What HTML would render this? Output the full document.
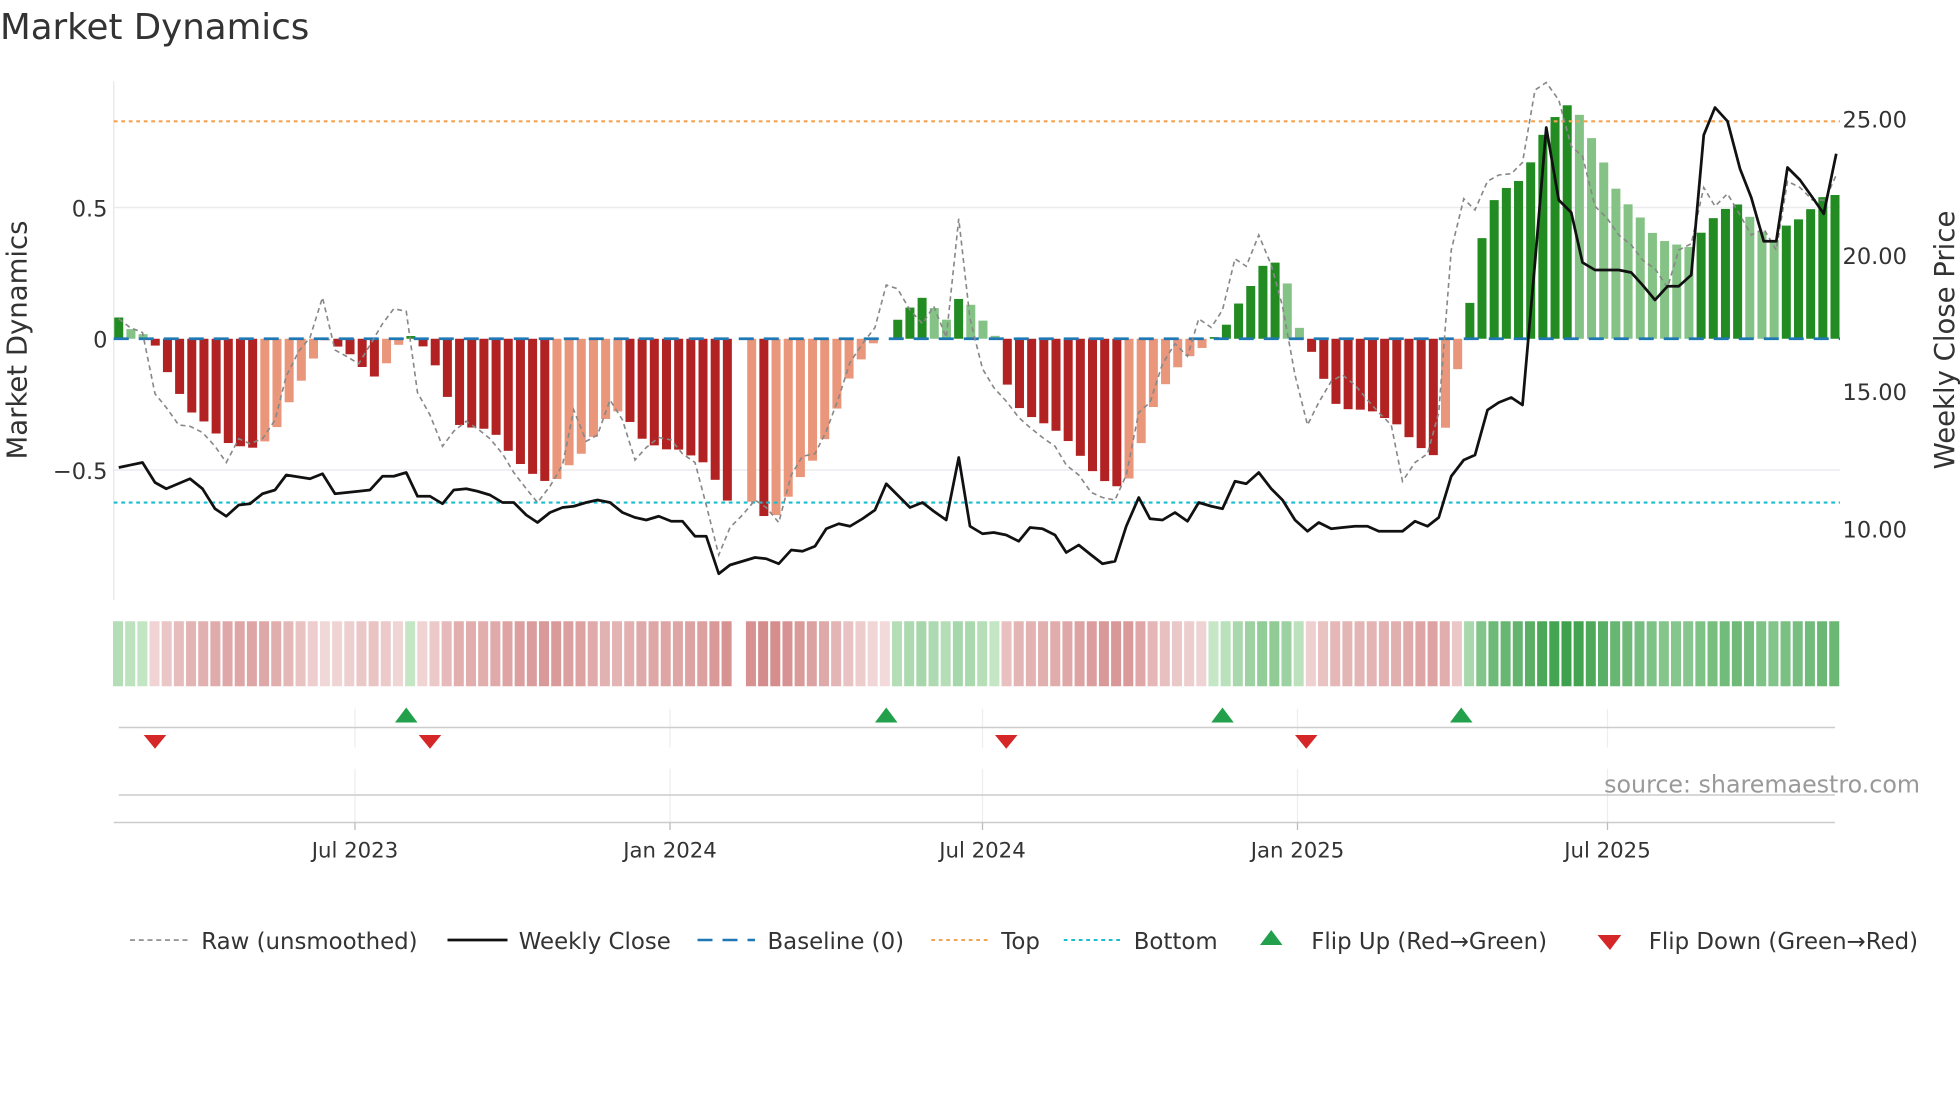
<!DOCTYPE html>
<html><head><meta charset="utf-8"><style>
html,body{margin:0;padding:0;background:#fff;}
svg{display:block;font-family:"DejaVu Sans","Liberation Sans",sans-serif;}
</style></head><body>
<svg id="c" width="1960" height="1102" viewBox="0 0 1568 881.6" xmlns="http://www.w3.org/2000/svg">
<rect width="1568" height="882" fill="#fff"/>
<text x="0" y="31" font-size="28.5" fill="#333">Market Dynamics</text>
<line x1="91" y1="65" x2="91" y2="480" stroke="#e6e6e6" stroke-width="1"/>
<line x1="91" y1="166" x2="1472" y2="166" stroke="#ebebf0" stroke-width="1.2"/>
<line x1="91" y1="376" x2="1472" y2="376" stroke="#ebebf0" stroke-width="1.2"/>
<g font-size="18" fill="#333" text-anchor="end">
<text x="86" y="173">0.5</text><text x="86" y="278">0</text><text x="86" y="383">−0.5</text>
</g>
<g font-size="18" fill="#333">
<text x="1474" y="102">25.00</text><text x="1474" y="211">20.00</text><text x="1474" y="320">15.00</text><text x="1474" y="430">10.00</text>
</g>
<text transform="translate(21,272) rotate(-90)" font-size="22" fill="#333" text-anchor="middle">Market Dynamics</text>
<text transform="translate(1563,272) rotate(-90)" font-size="22" fill="#333" text-anchor="middle">Weekly Close Price</text>
<g id="bars"></g>
<line x1="91" y1="271" x2="1472" y2="271" stroke="#1f77b4" stroke-width="2.2" stroke-dasharray="12,8"/>
<line x1="91" y1="97" x2="1472" y2="97" stroke="#f5a352" stroke-width="1.7" stroke-dasharray="3,3"/>
<line x1="91" y1="402" x2="1472" y2="402" stroke="#17becf" stroke-width="1.7" stroke-dasharray="3,3"/>
<polyline id="raw" fill="none" stroke="#888" stroke-width="1.3" stroke-dasharray="4,3"/>
<polyline id="close" fill="none" stroke="#111" stroke-width="2.2" stroke-linejoin="round"/>
<g id="heat"></g>
<g stroke="#eeeeee" stroke-width="1">
<line x1="284" y1="567" x2="284" y2="598"/><line x1="536" y1="567" x2="536" y2="598"/><line x1="786" y1="567" x2="786" y2="598"/><line x1="1038" y1="567" x2="1038" y2="598"/><line x1="1286" y1="567" x2="1286" y2="598"/>
<line x1="284" y1="615" x2="284" y2="658"/><line x1="536" y1="615" x2="536" y2="658"/><line x1="786" y1="615" x2="786" y2="658"/><line x1="1038" y1="615" x2="1038" y2="658"/><line x1="1286" y1="615" x2="1286" y2="658"/>
</g>
<line x1="95" y1="582" x2="1468" y2="582" stroke="#cccccc" stroke-width="1.2"/>
<line x1="95" y1="636" x2="1468" y2="636" stroke="#cccccc" stroke-width="1.2"/>
<line x1="91" y1="658" x2="1468" y2="658" stroke="#cccccc" stroke-width="1.2"/>
<g fill="#22a04b">
<polygon points="325,566 334,578 316,578"/><polygon points="709,566 718,578 700,578"/><polygon points="978,566 987,578 969,578"/><polygon points="1169,566 1178,578 1160,578"/>
</g>
<g fill="#d62728">
<polygon points="115,588 133,588 124,599"/><polygon points="335,588 353,588 344,599"/><polygon points="796,588 814,588 805,599"/><polygon points="1036,588 1054,588 1045,599"/>
</g>
<text x="1536" y="634" font-size="19" fill="#999" text-anchor="end">source: sharemaestro.com</text>
<g stroke="#bbb"><line x1="284" y1="658" x2="284" y2="664"/><line x1="536" y1="658" x2="536" y2="664"/><line x1="786" y1="658" x2="786" y2="664"/><line x1="1038" y1="658" x2="1038" y2="664"/><line x1="1286" y1="658" x2="1286" y2="664"/></g>
<g font-size="17" fill="#333" text-anchor="middle">
<text x="284" y="686">Jul 2023</text><text x="536" y="686">Jan 2024</text><text x="786" y="686">Jul 2024</text><text x="1038" y="686">Jan 2025</text><text x="1286" y="686">Jul 2025</text>
</g>
<g font-size="18.3" fill="#333">
<line x1="104" y1="752" x2="150" y2="752" stroke="#888" stroke-width="1.3" stroke-dasharray="4,3"/>
<text x="161" y="759">Raw (unsmoothed)</text>
<line x1="358" y1="752" x2="406" y2="752" stroke="#111" stroke-width="2.2"/>
<text x="415" y="759">Weekly Close</text>
<line x1="558" y1="752" x2="604" y2="752" stroke="#1f77b4" stroke-width="2" stroke-dasharray="12,8"/>
<text x="614" y="759">Baseline (0)</text>
<line x1="745" y1="752" x2="791" y2="752" stroke="#f5a352" stroke-width="1.6" stroke-dasharray="3,3"/>
<text x="801" y="759">Top</text>
<line x1="851" y1="752" x2="897" y2="752" stroke="#17becf" stroke-width="1.6" stroke-dasharray="3,3"/>
<text x="907" y="759">Bottom</text>
<polygon points="1017,744 1026,756 1008,756" fill="#22a04b"/>
<text x="1049" y="759">Flip Up (Red→Green)</text>
<polygon points="1278,748 1297,748 1288,760" fill="#d62728"/>
<text x="1319" y="759">Flip Down (Green→Red)</text>
</g>
</svg>
<script>
function interp(k,x){for(var i=0;i<k.length-1;i++){if(x>=k[i][0]&&x<=k[i+1][0]){var t=(x-k[i][0])/(k[i+1][0]-k[i][0]);return k[i][1]+t*(k[i+1][1]-k[i][1]);}}return x<k[0][0]?k[0][1]:k[k.length-1][1];}
function pairs(a){var r=[];for(var i=0;i<a.length;i+=2)r.push([a[i],a[i+1]]);return r;}
var H=pairs([95,17,104,8,114,4,120,0,124,-5,133,-25,143,-43,152,-58,162,-65,172,-75,181,-83,200,-88,210,-84,220,-74,229,-55,239,-37,248,-22,258,0,268,-5,277,-10,287,-18,296,-33,306,-25,315,-10,325,3,334,1,344,-15,354,-30,363,-68,382,-72,392,-72,402,-82,411,-97,421,-103,430,-112,440,-115,450,-110,459,-95,469,-90,478,-72,488,-60,498,-57,508,-73,517,-84,527,-86,537,-90,546,-88,556,-96,565,-100,575,-118,584,-133,604,-130,613,-145,623,-140,633,-122,642,-108,652,-95,661,-78,671,-52,680,-30,690,-15,700,-2,709,0,718,15,728,25,738,33,747,25,757,15,767,32,776,28,786,15,795,3,800,0,805,-35,815,-55,824,-62,834,-67,844,-73,853,-80,863,-92,873,-105,882,-113,892,-118,901,-118,911,-90,920,-60,930,-40,940,-25,950,-15,959,-10,969,0,978,5,988,25,997,35,1007,55,1017,65,1026,53,1036,30,1041,0,1046,-5,1055,-20,1065,-50,1074,-55,1084,-58,1094,-55,1103,-62,1113,-65,1122,-72,1132,-85,1142,-90,1151,-96,1161,-50,1171,0,1180,53,1190,102,1199,117,1209,123,1218,128,1228,148,1238,172,1247,180,1257,190,1266,175,1276,155,1286,135,1295,115,1305,105,1314,95,1324,82,1334,77,1343,75,1353,73,1363,88,1372,98,1382,105,1392,108,1401,96,1411,84,1421,78,1430,92,1440,96,1450,105,1460,115,1469,115]);
var C=pairs([95,374,114,370,124,386,133,391,152,383,162,391,172,407,181,413,191,404,200,403,210,395,220,392,229,380,248,383,258,379,268,395,287,393,296,392,306,381,315,381,325,378,334,397,344,397,354,403,363,392,373,391,382,393,392,396,402,402,411,402,421,412,430,418,440,410,450,406,459,405,469,402,478,400,488,402,498,410,508,414,517,416,527,413,537,417,546,417,556,429,565,429,575,459,584,452,594,449,604,446,613,447,623,451,633,440,642,441,652,437,661,423,671,419,680,421,690,415,700,408,709,387,718,396,728,406,738,402,747,409,757,416,767,366,776,421,786,427,795,426,805,428,815,433,824,422,834,423,844,428,853,442,863,436,873,444,882,451,892,449,901,421,911,398,920,415,930,416,940,410,950,417,959,402,969,405,978,407,988,385,997,387,1007,378,1017,391,1026,400,1036,416,1046,425,1055,418,1065,423,1074,422,1084,421,1094,421,1103,425,1113,425,1122,425,1132,417,1142,421,1151,414,1161,381,1171,368,1180,364,1190,328,1199,322,1209,318,1218,324,1228,210,1237,102,1247,160,1257,170,1266,210,1276,216,1286,216,1295,216,1305,218,1314,228,1324,240,1334,229,1343,229,1353,220,1363,108,1372,86,1382,97,1392,135,1401,158,1411,193,1421,193,1430,134,1440,144,1450,158,1459,171,1469,123]);
var R=pairs([95,255,104,262,114,266,124,315,133,326,143,340,152,341,162,346,172,357,181,370,191,351,200,355,210,351,220,336,229,301,239,281,248,270,258,238,268,280,277,285,287,291,296,276,306,259,315,247,325,249,334,314,344,332,354,357,363,345,373,337,382,343,392,351,402,363,411,378,421,391,430,402,440,389,450,372,459,328,469,353,478,348,488,320,498,336,508,368,517,358,527,350,537,352,546,363,556,370,565,404,575,444,584,422,594,412,604,400,613,406,623,418,633,380,642,365,652,363,661,345,671,318,680,290,690,275,700,262,709,228,718,231,728,248,738,259,747,245,757,270,767,175,776,255,786,295,795,310,805,321,815,334,824,342,834,350,844,357,853,372,863,380,873,394,882,398,892,400,901,380,911,330,920,322,930,291,940,275,950,285,959,255,969,262,978,248,988,207,997,213,1007,188,1017,212,1026,245,1036,300,1046,340,1055,322,1065,305,1074,300,1084,308,1094,320,1103,330,1113,340,1122,385,1132,370,1142,363,1151,330,1161,200,1171,159,1180,168,1190,145,1199,140,1209,139,1218,130,1228,72,1237,66,1247,80,1257,117,1266,125,1276,165,1286,175,1295,188,1305,196,1314,208,1324,215,1334,230,1343,200,1353,195,1363,150,1372,165,1382,155,1392,172,1401,188,1411,183,1421,200,1430,145,1440,150,1450,160,1460,160,1469,140]);
var NS="http://www.w3.org/2000/svg";
function el(t,a,p){var e=document.createElementNS(NS,t);for(var k in a)e.setAttribute(k,a[k]);p.appendChild(e);return e;}
var bars=document.getElementById('bars'),heat=document.getElementById('heat');
function mix(a,b,t){var r=[];for(var i=0;i<3;i++)r.push(Math.round(a[i]+(b[i]-a[i])*t));return 'rgb('+r.join(',')+')';}
var prev=0,N=142,step=(1468-95)/(N-1);
for(var i=0;i<N;i++){
  var x=95+i*step;
  var gap=Math.abs(x-594)<4;
  var h=interp(H,x);
  if(!gap&&Math.abs(h)>0.8){
    var col;
    if(h>0)col=(h>=prev)?'#228b22':'#85c285';
    else col=(h<=prev)?'#b22222':'#e9967a';
    el('rect',{x:x-3.6,y:h>0?271-h:271,width:7.2,height:Math.abs(h),fill:col},bars);
  }
  if(!gap){
    var t=Math.min(1,Math.abs(h)/190);
    var c=h>=0?mix([200,232,200],[60,160,75],Math.pow(t,0.8)):mix([242,218,218],[205,120,120],Math.pow(t,0.8));
    el('rect',{x:x-4.6,y:497,width:8,height:52,fill:c},heat);
  }
  prev=h;
}
function pl(K,id){var s='';for(var i=0;i<K.length;i++)s+=K[i][0]+','+K[i][1]+' ';document.getElementById(id).setAttribute('points',s);}
pl(R,'raw');pl(C,'close');
</script>
</body></html>
